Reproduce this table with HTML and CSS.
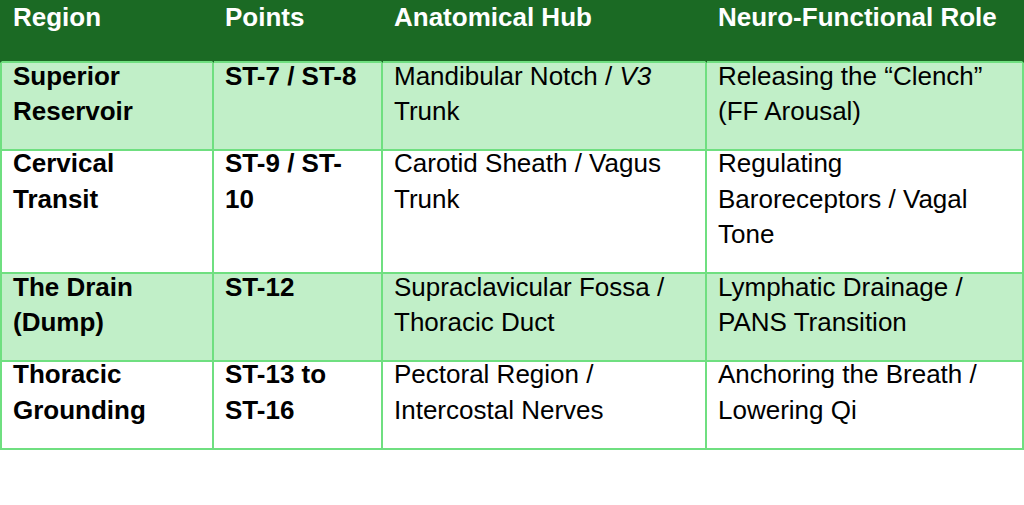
FILE: index.html
```html
<!DOCTYPE html>
<html lang="en">
<head>
<meta charset="utf-8">
<title>Stomach Meridian Regions</title>
<link rel="stylesheet" href="styles.css">
</head>
<body>
<table class="grid">
  <colgroup>
    <col class="c1"><col class="c2"><col class="c3"><col class="c4">
  </colgroup>
  <thead>
    <tr>
      <th class="first"><div class="tx">Region</div></th>
      <th><div class="tx">Points</div></th>
      <th><div class="tx">Anatomical Hub</div></th>
      <th><div class="tx">Neuro-Functional Role</div></th>
    </tr>
  </thead>
  <tbody>
    <tr class="alt">
      <td class="first b"><div class="tx">Superior Reservoir</div></td>
      <td class="b"><div class="tx">ST-7 / ST-8</div></td>
      <td><div class="tx">Mandibular Notch / <em>V3</em> Trunk</div></td>
      <td><div class="tx">Releasing the “Clench” (FF Arousal)</div></td>
    </tr>
    <tr>
      <td class="first b"><div class="tx">Cervical Transit</div></td>
      <td class="b"><div class="tx">ST-9 / ST-10</div></td>
      <td><div class="tx">Carotid Sheath / Vagus Trunk</div></td>
      <td><div class="tx">Regulating Baroreceptors / Vagal Tone</div></td>
    </tr>
    <tr class="alt">
      <td class="first b"><div class="tx">The Drain (Dump)</div></td>
      <td class="b"><div class="tx">ST-12</div></td>
      <td><div class="tx">Supraclavicular Fossa / Thoracic Duct</div></td>
      <td><div class="tx">Lymphatic Drainage / PANS Transition</div></td>
    </tr>
    <tr>
      <td class="first b"><div class="tx">Thoracic Grounding</div></td>
      <td class="b"><div class="tx">ST-13 to ST-16</div></td>
      <td><div class="tx">Pectoral Region / Intercostal Nerves</div></td>
      <td><div class="tx">Anchoring the Breath / Lowering Qi</div></td>
    </tr>
  </tbody>
</table>
</body>
</html>
```
FILE: styles.css
```css
html, body {
  margin: 0;
  padding: 0;
  background: #ffffff;
}
body {
  font-family: "Liberation Sans", Arial, sans-serif;
  font-size: 26px;
  color: #000000;
}
.grid {
  width: 1024px;
  table-layout: fixed;
  border-collapse: separate;
  border-spacing: 0;
}
.c1 { width: 214px; }
.c2 { width: 169px; }
.c3 { width: 324px; }
.c4 { width: 317px; }

th, td {
  text-align: left;
  vertical-align: top;
  padding: 0 11px 19.3px;
  border-right: 2px solid #6fdf80;
  border-bottom: 2px solid #6fdf80;
}
td.first { border-left: 2px solid #6fdf80; }
td .tx {
  line-height: 35.5px;
  margin-top: -4.5px;
}
th {
  background: #1b6a24;
  color: #ffffff;
  font-weight: bold;
  padding-bottom: 26px;
  border-right-color: #1b6a24;
}
th.first { border-left: 2px solid #1b6a24; }
th .tx {
  line-height: 35px;
}
tr.alt td { background: #c1efc8; }
td.b { font-weight: bold; }
em { font-style: italic; }
```
